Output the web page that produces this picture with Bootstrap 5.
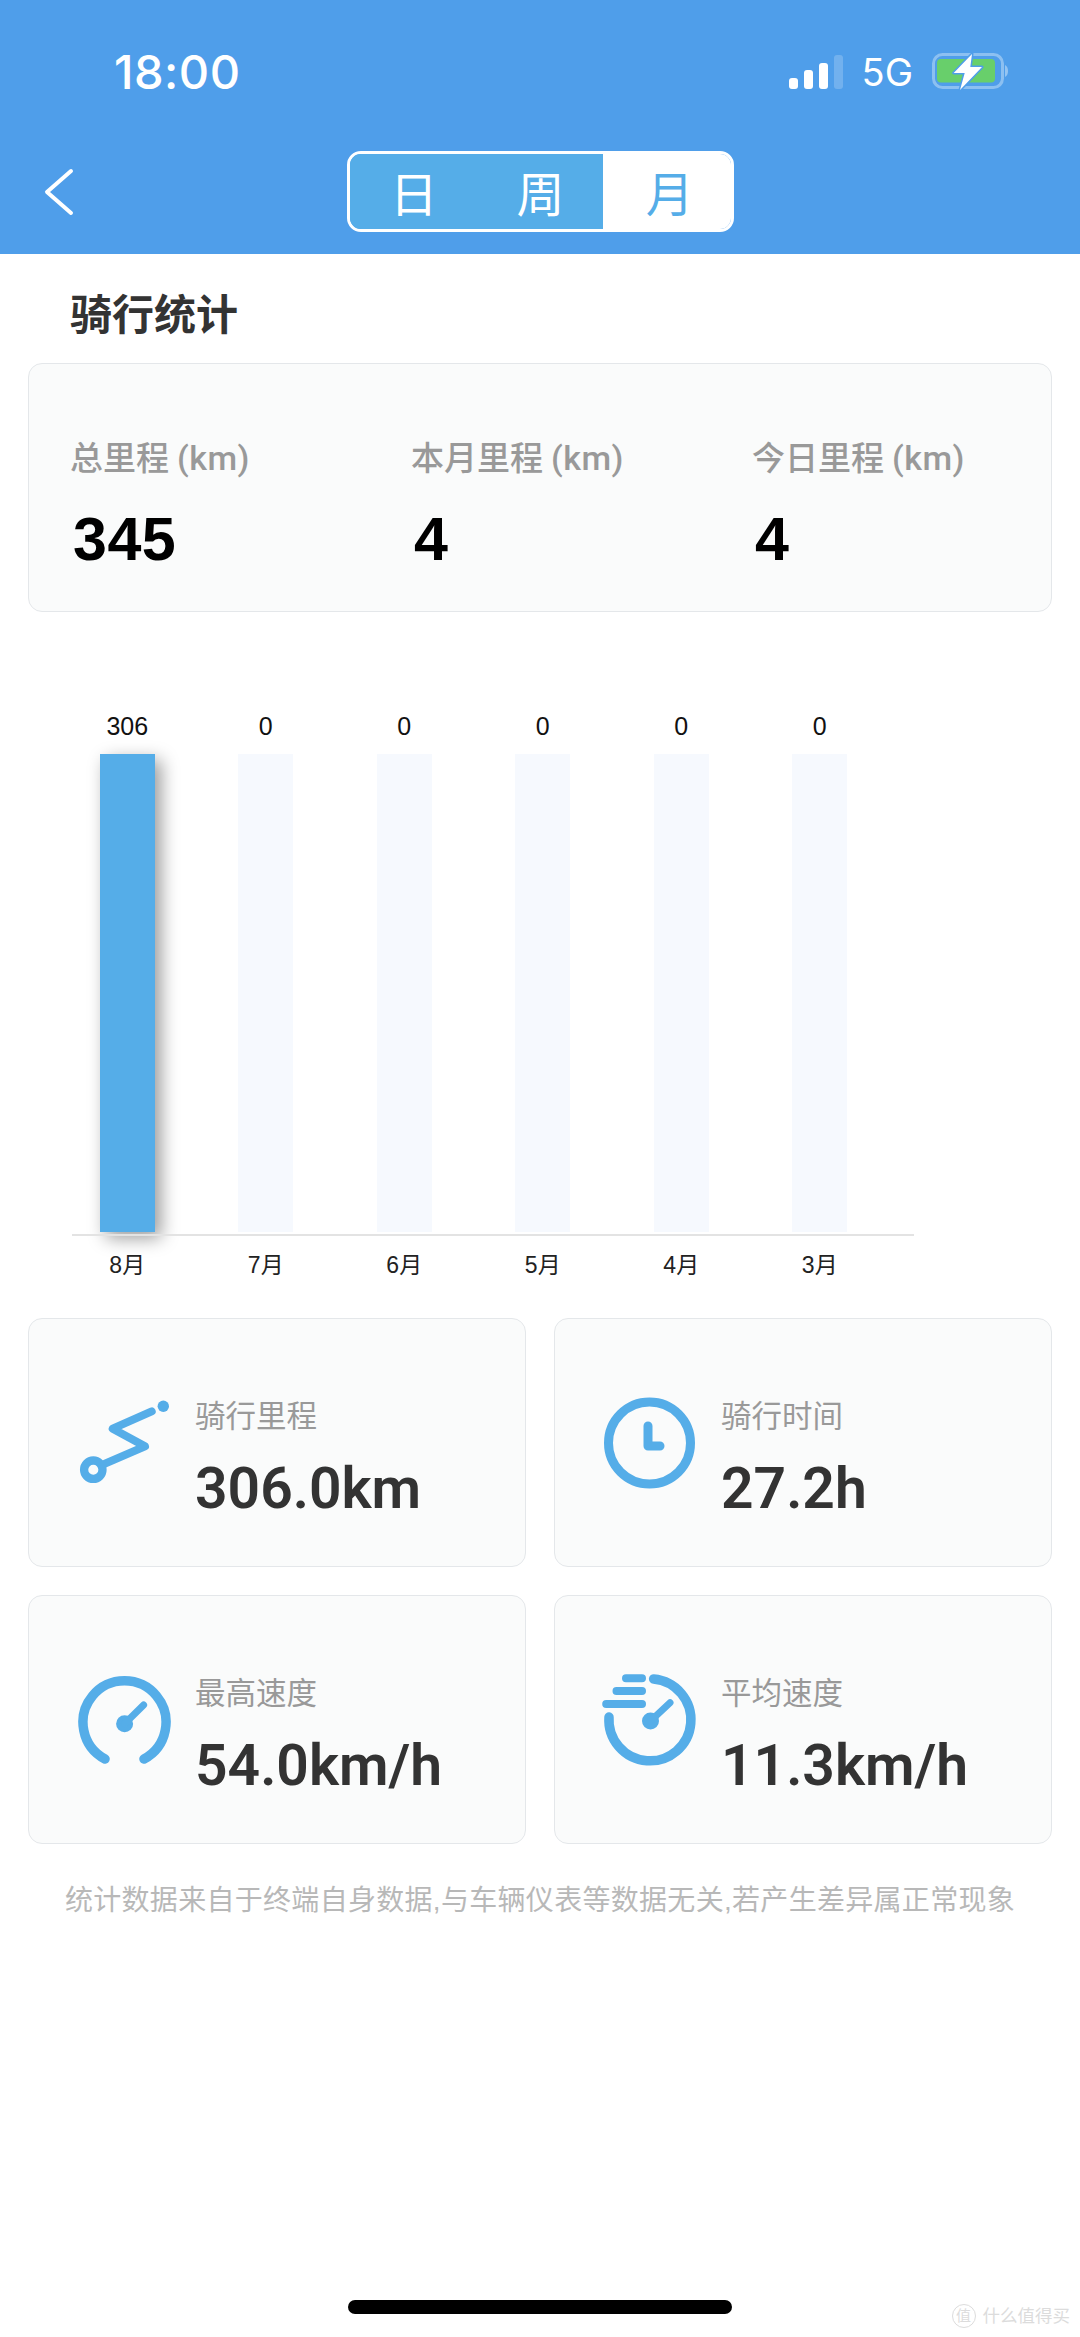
<!DOCTYPE html>
<html lang="zh-CN">
  <head>
    <meta charset="UTF-8" />
    <meta name="viewport" content="width=device-width, initial-scale=1" />
    <title>骑行统计</title>
    <link
      href="https://cdn.jsdelivr.net/npm/bootstrap@5.3.3/dist/css/bootstrap.min.css"
      rel="stylesheet"
    />
    <script src="https://cdn.jsdelivr.net/npm/bootstrap@5.3.3/dist/js/bootstrap.bundle.min.js"></script>
    <style>
      body {
        font-family: "Liberation Sans", "Noto Sans CJK SC", sans-serif;
        background: #fff;
        overflow: hidden;
      }

      .page-wrap {
        height: 2337px;
      }

      .app-header {
        background: #4f9eea;
        height: 254px;
        color: #fff;
      }

      .status-row {
        height: 143px;
        padding: 0 72px 0 114px;
      }

      .status-time {
        font-family: Inter, "Liberation Sans", sans-serif;
        font-size: 47px;
        font-weight: 500;
        letter-spacing: 0.5px;
        line-height: 1;
      }

      .status-net {
        font-family: Inter, "Liberation Sans", sans-serif;
        font-size: 38px;
        line-height: 1;
        margin: 0 19px 0 19px;
      }

      .nav-row {
        display: grid;
        grid-template-columns: 1fr auto 1fr;
        margin-top: 8px;
        height: 81px;
      }

      .back-link {
        padding-left: 42px;
      }

      .seg-group {
        width: 387px;
        height: 81px;
        margin-left: 1px;
        border: 3px solid #fff;
        border-radius: 14px;
        overflow: hidden;
      }

      .seg-group .btn {
        flex: 1 1 0;
        padding: 0;
        border: 0;
        border-radius: 0;
        background: #55ade8;
        color: #fff;
        font-family: "Noto Sans CJK SC", sans-serif;
        font-size: 48px;
        font-weight: 400;
        line-height: 75px;
      }

      .seg-group .btn.seg-on {
        background: #fff;
        color: #55ade8;
        text-indent: 5px;
      }

      .page-title {
        font-size: 42px;
        font-weight: 700;
        color: #333;
        line-height: 60px;
        margin: 32px 0 0 70px;
      }

      .stat-box {
        background: #fafbfb;
        border: 1px solid #e4e7ea;
        border-radius: 14px;
      }

      .total-box {
        height: 249px;
        margin: 17px 28px 0;
        padding: 70px 0 0 41px;
      }

      .total-cell {
        width: 341px;
      }

      .total-label {
        font-family: "Noto Sans CJK SC", sans-serif;
        font-size: 33px;
        font-weight: 500;
        color: #999;
        line-height: 44px;
      }

      .total-label span {
        font-family: Roboto, "Liberation Sans", sans-serif;
        font-size: 34px;
        letter-spacing: 0.5px;
        margin-left: 8px;
      }

      .total-num {
        font-size: 61px;
        font-weight: 700;
        letter-spacing: 0.5px;
        color: #000;
        line-height: 60px;
        margin: 29px 0 0 3px;
      }

      .chart-wrap {
        padding: 99px 0 0 58px;
      }

      .chart-col {
        width: 138.5px;
      }

      .chart-num {
        font-size: 25px;
        line-height: 30px;
        color: #111;
        margin-bottom: 13px;
      }

      .chart-bar {
        width: 55px;
        height: 478px;
        background: #f6f9fe;
      }

      .chart-bar.bar-on {
        background: #55ade8;
        box-shadow: 6px 6px 18px rgba(0, 0, 0, 0.4);
      }

      .chart-axis {
        width: 842px;
        height: 2px;
        background: #e3e3e3;
        margin: 2px 0 14px 72px;
      }

      .month-row {
        padding-left: 58px;
      }

      .chart-month {
        font-size: 23px;
        line-height: 30px;
        color: #222;
      }

      .stats-row {
        --bs-gutter-x: 28px;
        --bs-gutter-y: 28px;
        margin-top: 10px;
      }

      .stats-pad {
        padding: 0 28px;
      }

      .metric-box {
        height: 249px;
        padding-left: 47px;
      }

      .metric-text {
        margin-left: 19px;
        padding-top: 28px;
      }

      .metric-label {
        font-size: 30.5px;
        line-height: 40px;
        color: #999;
        font-family: "Noto Sans CJK SC", sans-serif;
        font-weight: 400;
      }

      .metric-num {
        font-family: Roboto, "Liberation Sans", sans-serif;
        font-size: 57px;
        font-weight: 600;
        line-height: 60px;
        color: #333;
        margin-top: 25px;
      }

      .foot-note {
        font-size: 28px;
        letter-spacing: 0.3px;
        line-height: 40px;
        color: #b8b8b8;
        margin-top: 37px;
      }

      .home-bar {
        width: 384px;
        height: 14px;
        background: #000;
        border-radius: 7px;
        margin-bottom: 23px;
      }

      .wm-mark {
        position: absolute;
        right: 10px;
        bottom: 9px;
        color: #dcdcdc;
        font-size: 17.5px;
        line-height: 24px;
      }

      .wm-seal {
        width: 24px;
        height: 24px;
        border: 1px solid #dcdcdc;
        border-radius: 50%;
        font-size: 15px;
        margin-right: 7px;
      }
    </style>
  </head>
  <body>
    <div class="page-wrap d-flex flex-column position-relative">
      <header class="app-header">
        <div class="status-row d-flex align-items-center justify-content-between">
          <div class="status-time">18:00</div>
          <div class="d-flex align-items-center">
            <svg width="54" height="34" viewBox="0 0 54 34">
              <rect x="0" y="23" width="9" height="11" rx="3" fill="#fff" />
              <rect x="15" y="15" width="9" height="19" rx="3" fill="#fff" />
              <rect x="30" y="8" width="9" height="26" rx="3" fill="#fff" />
              <rect x="45" y="0" width="9" height="34" rx="3" fill="#fff" opacity="0.2" />
            </svg>
            <span class="status-net">5G</span>
            <svg width="76" height="38" viewBox="0 0 76 38">
              <rect x="1.5" y="1.5" width="69" height="33" rx="9" fill="none" stroke="#fff" stroke-opacity="0.35" stroke-width="3" />
              <rect x="5" y="6" width="58" height="23.5" rx="4" fill="#68cf6b" />
              <path d="M73 12c2 1 3 3 3 6s-1 5-3 6z" fill="#fff" fill-opacity="0.4" />
              <path d="M40 1 21.7 20h11L28 37l22-23H38.3z" fill="#fff" stroke="#4f9eea" stroke-width="3" stroke-linejoin="round" paint-order="stroke" />
            </svg>
          </div>
        </div>
        <div class="nav-row">
          <div class="back-link d-flex align-items-center">
            <svg width="34" height="48" viewBox="0 0 34 48">
              <path d="M29 3 5 24l24 21" fill="none" stroke="#fff" stroke-width="4" stroke-linecap="round" stroke-linejoin="round" />
            </svg>
          </div>
          <div class="btn-group seg-group" role="group">
            <button type="button" class="btn">日</button>
            <button type="button" class="btn">周</button>
            <button type="button" class="btn seg-on">月</button>
          </div>
        </div>
      </header>

      <h1 class="page-title">骑行统计</h1>

      <div class="stat-box total-box">
        <div class="d-flex">
          <div class="total-cell flex-shrink-0">
            <div class="total-label">总里程<span>(km)</span></div>
            <div class="total-num">345</div>
          </div>
          <div class="total-cell flex-shrink-0">
            <div class="total-label">本月里程<span>(km)</span></div>
            <div class="total-num">4</div>
          </div>
          <div class="total-cell flex-shrink-0">
            <div class="total-label">今日里程<span>(km)</span></div>
            <div class="total-num">4</div>
          </div>
        </div>
      </div>

      <div class="chart-wrap d-flex">
        <div class="chart-col d-flex flex-column align-items-center">
          <div class="chart-num">306</div>
          <div class="chart-bar bar-on"></div>
        </div>
        <div class="chart-col d-flex flex-column align-items-center">
          <div class="chart-num">0</div>
          <div class="chart-bar"></div>
        </div>
        <div class="chart-col d-flex flex-column align-items-center">
          <div class="chart-num">0</div>
          <div class="chart-bar"></div>
        </div>
        <div class="chart-col d-flex flex-column align-items-center">
          <div class="chart-num">0</div>
          <div class="chart-bar"></div>
        </div>
        <div class="chart-col d-flex flex-column align-items-center">
          <div class="chart-num">0</div>
          <div class="chart-bar"></div>
        </div>
        <div class="chart-col d-flex flex-column align-items-center">
          <div class="chart-num">0</div>
          <div class="chart-bar"></div>
        </div>
      </div>
      <div class="chart-axis"></div>
      <div class="month-row d-flex">
        <div class="chart-col chart-month text-center">8月</div>
        <div class="chart-col chart-month text-center">7月</div>
        <div class="chart-col chart-month text-center">6月</div>
        <div class="chart-col chart-month text-center">5月</div>
        <div class="chart-col chart-month text-center">4月</div>
        <div class="chart-col chart-month text-center">3月</div>
      </div>

      <div class="stats-pad">
        <div class="row stats-row">
          <div class="col-6">
            <div class="stat-box metric-box d-flex align-items-center">
              <svg width="100" height="100" viewBox="0 0 100 100" class="flex-shrink-0">
                <circle cx="17.3" cy="76.7" r="9.2" fill="none" stroke="#55ade8" stroke-width="8.3" />
                <path d="M29 70.7 69 53.3 36.7 35.7 75.7 18.3" fill="none" stroke="#55ade8" stroke-width="8" stroke-linecap="round" stroke-linejoin="round" />
                <circle cx="87.3" cy="13.3" r="5.7" fill="#55ade8" />
              </svg>
              <div class="metric-text">
                <div class="metric-label">骑行里程</div>
                <div class="metric-num">306.0km</div>
              </div>
            </div>
          </div>
          <div class="col-6">
            <div class="stat-box metric-box d-flex align-items-center">
              <svg width="100" height="100" viewBox="0 0 100 100" class="flex-shrink-0">
                <circle cx="47.5" cy="50" r="41" fill="none" stroke="#55ade8" stroke-width="9" />
                <path d="M46 33V53H58" fill="none" stroke="#55ade8" stroke-width="9" stroke-linecap="round" stroke-linejoin="round" />
              </svg>
              <div class="metric-text">
                <div class="metric-label">骑行时间</div>
                <div class="metric-num">27.2h</div>
              </div>
            </div>
          </div>
          <div class="col-6">
            <div class="stat-box metric-box d-flex align-items-center">
              <svg width="100" height="100" viewBox="0 0 100 100" class="flex-shrink-0">
                <path d="M29 89A41.5 41.5 0 1 1 68 89" fill="none" stroke="#55ade8" stroke-width="9.5" stroke-linecap="round" />
                <circle cx="48.6" cy="53.7" r="8.5" fill="#55ade8" />
                <path d="M48.6 53.7 67.6 35" fill="none" stroke="#55ade8" stroke-width="7" stroke-linecap="round" />
              </svg>
              <div class="metric-text">
                <div class="metric-label">最高速度</div>
                <div class="metric-num">54.0km/h</div>
              </div>
            </div>
          </div>
          <div class="col-6">
            <div class="stat-box metric-box d-flex align-items-center">
              <svg width="100" height="100" viewBox="0 0 100 100" class="flex-shrink-0">
                <path d="M51.6 9A41 41 0 1 1 7 47" fill="none" stroke="#55ade8" stroke-width="9.5" stroke-linecap="round" />
                <path d="M24 8.3H40M14.5 21H40M4.2 34H40" fill="none" stroke="#55ade8" stroke-width="8" stroke-linecap="round" />
                <circle cx="48.5" cy="51" r="8.5" fill="#55ade8" />
                <path d="M48.5 51 68 32.7" fill="none" stroke="#55ade8" stroke-width="7" stroke-linecap="round" />
              </svg>
              <div class="metric-text">
                <div class="metric-label">平均速度</div>
                <div class="metric-num">11.3km/h</div>
              </div>
            </div>
          </div>
        </div>
      </div>

      <p class="foot-note text-center mb-0">统计数据来自于终端自身数据,与车辆仪表等数据无关,若产生差异属正常现象</p>

      <div class="home-bar mt-auto mx-auto"></div>

      <div class="wm-mark d-flex align-items-center">
        <span class="wm-seal d-flex align-items-center justify-content-center">值</span>
        <span>什么值得买</span>
      </div>
    </div>
  </body>
</html>
